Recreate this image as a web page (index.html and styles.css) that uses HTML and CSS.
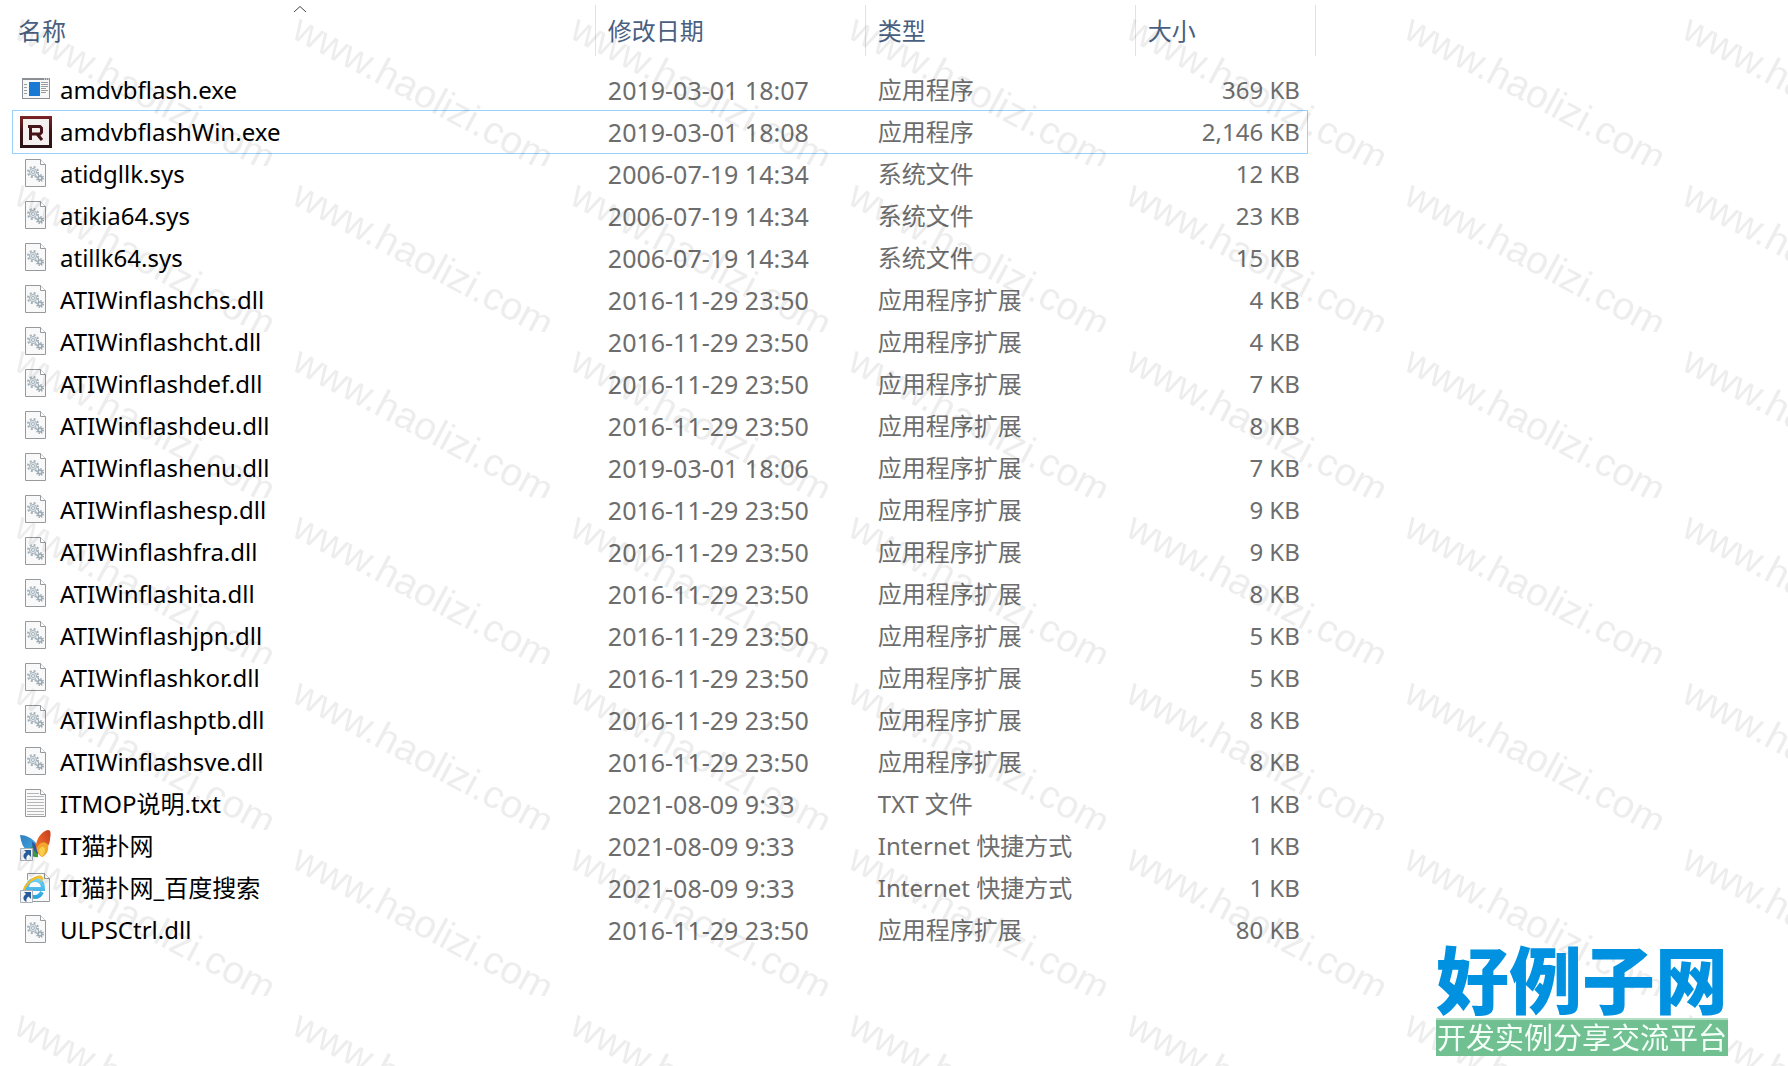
FILE: index.html
```
<!DOCTYPE html>
<html lang="zh-CN">
<head>
    <meta charset="UTF-8">
    <meta name="viewport" content="width=device-width, initial-scale=1.0">
    <title>amdvbflash</title>
    <link rel="stylesheet" href="styles.css">
</head>
<body>

<!-- file icons -->
<svg class="sprite" width="0" height="0" aria-hidden="true">
    <defs>
        <linearGradient id="gRed" x1="0" y1="0" x2="0" y2="1">
            <stop offset="0" stop-color="#7d2425"/><stop offset=".5" stop-color="#3d1316"/><stop offset="1" stop-color="#2a1315"/>
        </linearGradient>
        <linearGradient id="gBlue" x1="0" y1="0" x2="1" y2="1">
            <stop offset="0" stop-color="#2f7fbf"/><stop offset=".6" stop-color="#3b9bd8"/><stop offset="1" stop-color="#1f4f96"/>
        </linearGradient>
        <linearGradient id="gOrange" x1="1" y1="0" x2="0" y2="1">
            <stop offset="0" stop-color="#c63a1c"/><stop offset=".6" stop-color="#e8652a"/><stop offset="1" stop-color="#f2932e"/>
        </linearGradient>
        <linearGradient id="gIe" x1="0" y1="0" x2="0" y2="1">
            <stop offset="0" stop-color="#6fd0f5"/><stop offset="1" stop-color="#2ba3dd"/>
        </linearGradient>
    </defs>
    <symbol id="i-exe" viewBox="0 0 32 32">
        <rect x="2.5" y="4.500" width="27" height="20" fill="#f7f7f7" stroke="#8c9094"/>
        <path d="M2 4h28v2H2z" fill="#8c9094"/>
        <path d="M24 5h1M26 5h1M28 5h1" stroke="#fff"/>
        <path d="M9 8h11v14H9z" fill="#1979d3"/>
        <path d="M4 10.500h3M4 13.500h3M4 16.500h3M4 19.500h3M21 8.500h7M21 10.500h7M21 12.500h7M21 14.500h5M21 16.500h7M21 18.500h5" stroke="#9a9da0"/>
    </symbol>
    <symbol id="i-radeon" viewBox="0 0 32 32">
        <path d="M0 0h32v32H0z" fill="url(#gRed)"/>
        <path d="M3 3h26v26H3z" fill="#f4f0f0"/>
        <path d="M8 10.500h12l1.500 1.500v4.500L20 18h-9.500M10.500 12v12M17 18l5 6" fill="none" stroke="#471417" stroke-width="3"/>
    </symbol>
    <symbol id="i-sys" viewBox="0 0 32 32">
        <path d="M5.500 1.500h15l5 5v22h-20z" fill="#f9f9f9" stroke="#979a9c"/>
        <path d="M20.500 1.500v5h5" fill="#fff" stroke="#979a9c"/>
        <circle cx="13" cy="14" r="5" fill="none" stroke="#a3b0b8" stroke-width="2" stroke-dasharray="2 1.930"/>
        <circle cx="13" cy="14" r="3.600" fill="#dde5ea" stroke="#a9b5bd"/>
        <circle cx="13" cy="14" r="1.500" fill="#f9f9f9" stroke="#a3b0b8"/>
        <circle cx="20" cy="20" r="3.300" fill="none" stroke="#98a6af" stroke-width="1.500" stroke-dasharray="1.300 1.290"/>
        <circle cx="20" cy="20" r="2" fill="#e2e9ed" stroke="#98a6af" stroke-width="1.500"/>
    </symbol>
    <symbol id="i-txt" viewBox="0 0 32 32">
        <path d="M5.500 1.500h15l5 5v22h-20z" fill="#fafafa" stroke="#979a9c"/>
        <path d="M20.500 1.500v5h5" fill="#fff" stroke="#979a9c"/>
        <path d="M7 5.500h12M7 8.500h17M7 11.500h17M7 14.500h17M7 17.500h17M7 20.500h17M7 23.500h17M7 26.500h17" stroke="#b4b6b8"/>
    </symbol>
    <symbol id="i-arrow" viewBox="0 0 32 32">
        <path d="M.5 18.500h12v12H.5z" fill="#f6f8fa" stroke="#aab0b6"/>
        <path d="M4 20h7v7l-2.500-2.500C6.500 26 6 27.500 6.500 30 2.500 28 2.500 24.500 6 22z" fill="#275b9c"/>
    </symbol>
    <symbol id="i-butterfly" viewBox="0 0 32 32">
        <path d="M0 5c6 0 12 3 16 8 2 4 2 9 2 14-3 0-5-1-6-3-1-2-2-3-5-4C3 18 1 12 0 5z" fill="url(#gBlue)"/>
        <path d="M11 17c4-1 7 4 7 10-4 1-8-2-8-6 0-2 0-3 1-4z" fill="#3c9b45"/>
        <path d="M12 12c3 1 5 5 6 12-3-2-6-6-6-12z" fill="#31569a"/>
        <path d="M16 14C18 6 23 1 28 0c3 0 3 4 2 9 0 3-1 5-2 7 0 5-2 9-6 11-4-2-6-7-6-13z" fill="url(#gOrange)"/>
        <path d="M17 18c2-6 8-8 11-3 1 5-1 9-6 12-3-2-5-5-5-9z" fill="#f3a62c"/>
        <path d="M19 20c2-4 5-4 6-1 0 3-1 6-3 8-2-2-3-4-3-7z" fill="#f9cf4a"/>
        <use href="#i-arrow" width="32" height="32"/>
    </symbol>
    <symbol id="i-ie" viewBox="0 0 32 32">
        <path d="M7.500 1.500h17l5 5v23h-22z" fill="#f9f9f9" stroke="#979a9c"/>
        <path d="M24.500 1.500v5h5" fill="#fff" stroke="#979a9c"/>
        <path d="M22 20c-2 4-4 5-7 5-5 0-8-3-8-8s3-9 8-9 8 3 8 9H8" fill="none" stroke="#fff" stroke-width="6"/>
        <path d="M22 20c-2 4-4 5-7 5-5 0-8-3-8-8s3-9 8-9 8 3 8 9H8" fill="none" stroke="url(#gIe)" stroke-width="4"/>
        <path d="M4 22C0 16 12 4 20 4c3 0 3 3 1 6 1-3 0-4-2-4C13 6 3 15 4 22z" fill="#f7c52b" stroke="#eeb71c"/>
        <use href="#i-arrow" width="32" height="32"/>
    </symbol>
</svg>

<main class="explorer">
    <table class="files">
        <colgroup>
            <col class="col-name">
            <col class="col-date">
            <col class="col-type">
            <col class="col-size">
        </colgroup>
        <thead>
            <tr>
                <th aria-sort="ascending">
                    <svg class="sort-arrow" viewBox="0 0 16 8" aria-hidden="true"><path d="M2 7l6-5.500L14 7" fill="none" stroke="#444"/></svg>
                    <button type="button">名称</button>
                </th>
                <th><button type="button">修改日期</button></th>
                <th><button type="button">类型</button></th>
                <th><button type="button">大小</button></th>
            </tr>
        </thead>
        <tbody>
            <tr><td><span class="file"><svg class="icon"><use href="#i-exe"/></svg>amdvbflash.exe</span></td><td>2019-03-01 18:07</td><td>应用程序</td><td>369 KB</td></tr>
            <tr class="selected"><td><span class="file"><svg class="icon"><use href="#i-radeon"/></svg>amdvbflashWin.exe</span></td><td>2019-03-01 18:08</td><td>应用程序</td><td>2,146 KB</td></tr>
            <tr><td><span class="file"><svg class="icon"><use href="#i-sys"/></svg>atidgllk.sys</span></td><td>2006-07-19 14:34</td><td>系统文件</td><td>12 KB</td></tr>
            <tr><td><span class="file"><svg class="icon"><use href="#i-sys"/></svg>atikia64.sys</span></td><td>2006-07-19 14:34</td><td>系统文件</td><td>23 KB</td></tr>
            <tr><td><span class="file"><svg class="icon"><use href="#i-sys"/></svg>atillk64.sys</span></td><td>2006-07-19 14:34</td><td>系统文件</td><td>15 KB</td></tr>
            <tr><td><span class="file"><svg class="icon"><use href="#i-sys"/></svg>ATIWinflashchs.dll</span></td><td>2016-11-29 23:50</td><td>应用程序扩展</td><td>4 KB</td></tr>
            <tr><td><span class="file"><svg class="icon"><use href="#i-sys"/></svg>ATIWinflashcht.dll</span></td><td>2016-11-29 23:50</td><td>应用程序扩展</td><td>4 KB</td></tr>
            <tr><td><span class="file"><svg class="icon"><use href="#i-sys"/></svg>ATIWinflashdef.dll</span></td><td>2016-11-29 23:50</td><td>应用程序扩展</td><td>7 KB</td></tr>
            <tr><td><span class="file"><svg class="icon"><use href="#i-sys"/></svg>ATIWinflashdeu.dll</span></td><td>2016-11-29 23:50</td><td>应用程序扩展</td><td>8 KB</td></tr>
            <tr><td><span class="file"><svg class="icon"><use href="#i-sys"/></svg>ATIWinflashenu.dll</span></td><td>2019-03-01 18:06</td><td>应用程序扩展</td><td>7 KB</td></tr>
            <tr><td><span class="file"><svg class="icon"><use href="#i-sys"/></svg>ATIWinflashesp.dll</span></td><td>2016-11-29 23:50</td><td>应用程序扩展</td><td>9 KB</td></tr>
            <tr><td><span class="file"><svg class="icon"><use href="#i-sys"/></svg>ATIWinflashfra.dll</span></td><td>2016-11-29 23:50</td><td>应用程序扩展</td><td>9 KB</td></tr>
            <tr><td><span class="file"><svg class="icon"><use href="#i-sys"/></svg>ATIWinflashita.dll</span></td><td>2016-11-29 23:50</td><td>应用程序扩展</td><td>8 KB</td></tr>
            <tr><td><span class="file"><svg class="icon"><use href="#i-sys"/></svg>ATIWinflashjpn.dll</span></td><td>2016-11-29 23:50</td><td>应用程序扩展</td><td>5 KB</td></tr>
            <tr><td><span class="file"><svg class="icon"><use href="#i-sys"/></svg>ATIWinflashkor.dll</span></td><td>2016-11-29 23:50</td><td>应用程序扩展</td><td>5 KB</td></tr>
            <tr><td><span class="file"><svg class="icon"><use href="#i-sys"/></svg>ATIWinflashptb.dll</span></td><td>2016-11-29 23:50</td><td>应用程序扩展</td><td>8 KB</td></tr>
            <tr><td><span class="file"><svg class="icon"><use href="#i-sys"/></svg>ATIWinflashsve.dll</span></td><td>2016-11-29 23:50</td><td>应用程序扩展</td><td>8 KB</td></tr>
            <tr><td><span class="file"><svg class="icon"><use href="#i-txt"/></svg>ITMOP说明.txt</span></td><td>2021-08-09 9:33</td><td>TXT 文件</td><td>1 KB</td></tr>
            <tr><td><span class="file"><svg class="icon"><use href="#i-butterfly"/></svg>IT猫扑网</span></td><td>2021-08-09 9:33</td><td>Internet 快捷方式</td><td>1 KB</td></tr>
            <tr><td><span class="file"><svg class="icon"><use href="#i-ie"/></svg>IT猫扑网_百度搜索</span></td><td>2021-08-09 9:33</td><td>Internet 快捷方式</td><td>1 KB</td></tr>
            <tr><td><span class="file"><svg class="icon"><use href="#i-sys"/></svg>ULPSCtrl.dll</span></td><td>2016-11-29 23:50</td><td>应用程序扩展</td><td>80 KB</td></tr>
        </tbody>
    </table>
</main>

<!-- repeated site address over the list -->
<svg class="watermark" aria-hidden="true">
    <pattern id="mark" width="278" height="166" patternUnits="userSpaceOnUse">
        <text class="mark-text" transform="translate(12 37) rotate(28)">www.haolizi.com</text>
    </pattern>
    <rect width="100%" height="100%" fill="url(#mark)"/>
</svg>

<div class="site-logo">
    <div class="logo-name">好例子网</div>
    <div class="logo-slogan">开发实例分享交流平台</div>
</div>

</body>
</html>
```
FILE: styles.css
```
* {
    box-sizing: border-box;
}
body {
    margin: 0;
    min-height: 100vh;
    background: #fff;
    color: #6d6d6d;
    font-family: "Noto Sans", "Noto Sans CJK SC", sans-serif;
    font-size: 24px;
    line-height: 42px;
}
.sprite {
    position: absolute;
}
.explorer {
    padding: 5px 0 0 13px;
}

/* file table */
.files {
    width: 73.4%;
    table-layout: fixed;
    border-collapse: separate;
    border-spacing: 0;
}
.col-date,
.col-type {
    width: 270px;
}
.col-size {
    width: 180px;
}
.files th {
    position: relative;
    height: 51px;
    padding: 0;
    border-right: 1px solid #e2e2e2;
    text-align: left;
}
.files th button {
    display: block;
    width: 100%;
    padding: 1px 0 0 12px;
    border: 0;
    background: none;
    color: #4a5f7f;
    font: inherit;
    font-weight: 400;
    text-align: left;
    cursor: pointer;
}
.files th:first-child button {
    padding-left: 5px;
}
.sort-arrow {
    position: absolute;
    top: 0;
    left: 48%;
    width: 16px;
    height: 8px;
}
.files tbody::before {
    content: "";
    display: block;
    height: 13px;
}
.files td {
    height: 42px;
    padding: 0 0 0 12px;
    white-space: nowrap;
}
.files td:first-child {
    padding-left: 7px;
    color: #000;
}
.files td:nth-child(2) {
    font-size: 25px;
}
.files td:last-child {
    padding-right: 16px;
    text-align: right;
}
.file {
    display: flex;
    align-items: center;
    gap: 8px;
}
.icon {
    flex: none;
    width: 32px;
    height: 32px;
}

/* focus frame, stops short of the last header divider */
.selected {
    position: relative;
}
.selected td:first-child::before {
    content: "";
    position: absolute;
    top: -1px;
    right: 8px;
    bottom: -1px;
    left: -1px;
    border: 1px solid #99d1ff;
}

.watermark {
    position: fixed;
    top: 0;
    left: 0;
    width: 100%;
    height: 100%;
    pointer-events: none;
}
.mark-text {
    fill: #000;
    fill-opacity: 0.07;
    font-family: "Liberation Sans", Arial, sans-serif;
    font-size: 39px;
}

.site-logo {
    position: fixed;
    right: 60px;
    bottom: 10px;
    font-family: "Noto Sans CJK SC", sans-serif;
    text-align: center;
    white-space: nowrap;
}
.logo-name {
    padding-bottom: 6px;
    color: #0092e0;
    font-size: 73px;
    font-weight: 900;
    line-height: 72px;
}
.logo-slogan {
    padding: 0 1px 4px;
    border-top: 2px solid #b5dfc5;
    background: #70c092;
    color: #f4fff8;
    font-size: 29px;
    line-height: 32px;
}
```
